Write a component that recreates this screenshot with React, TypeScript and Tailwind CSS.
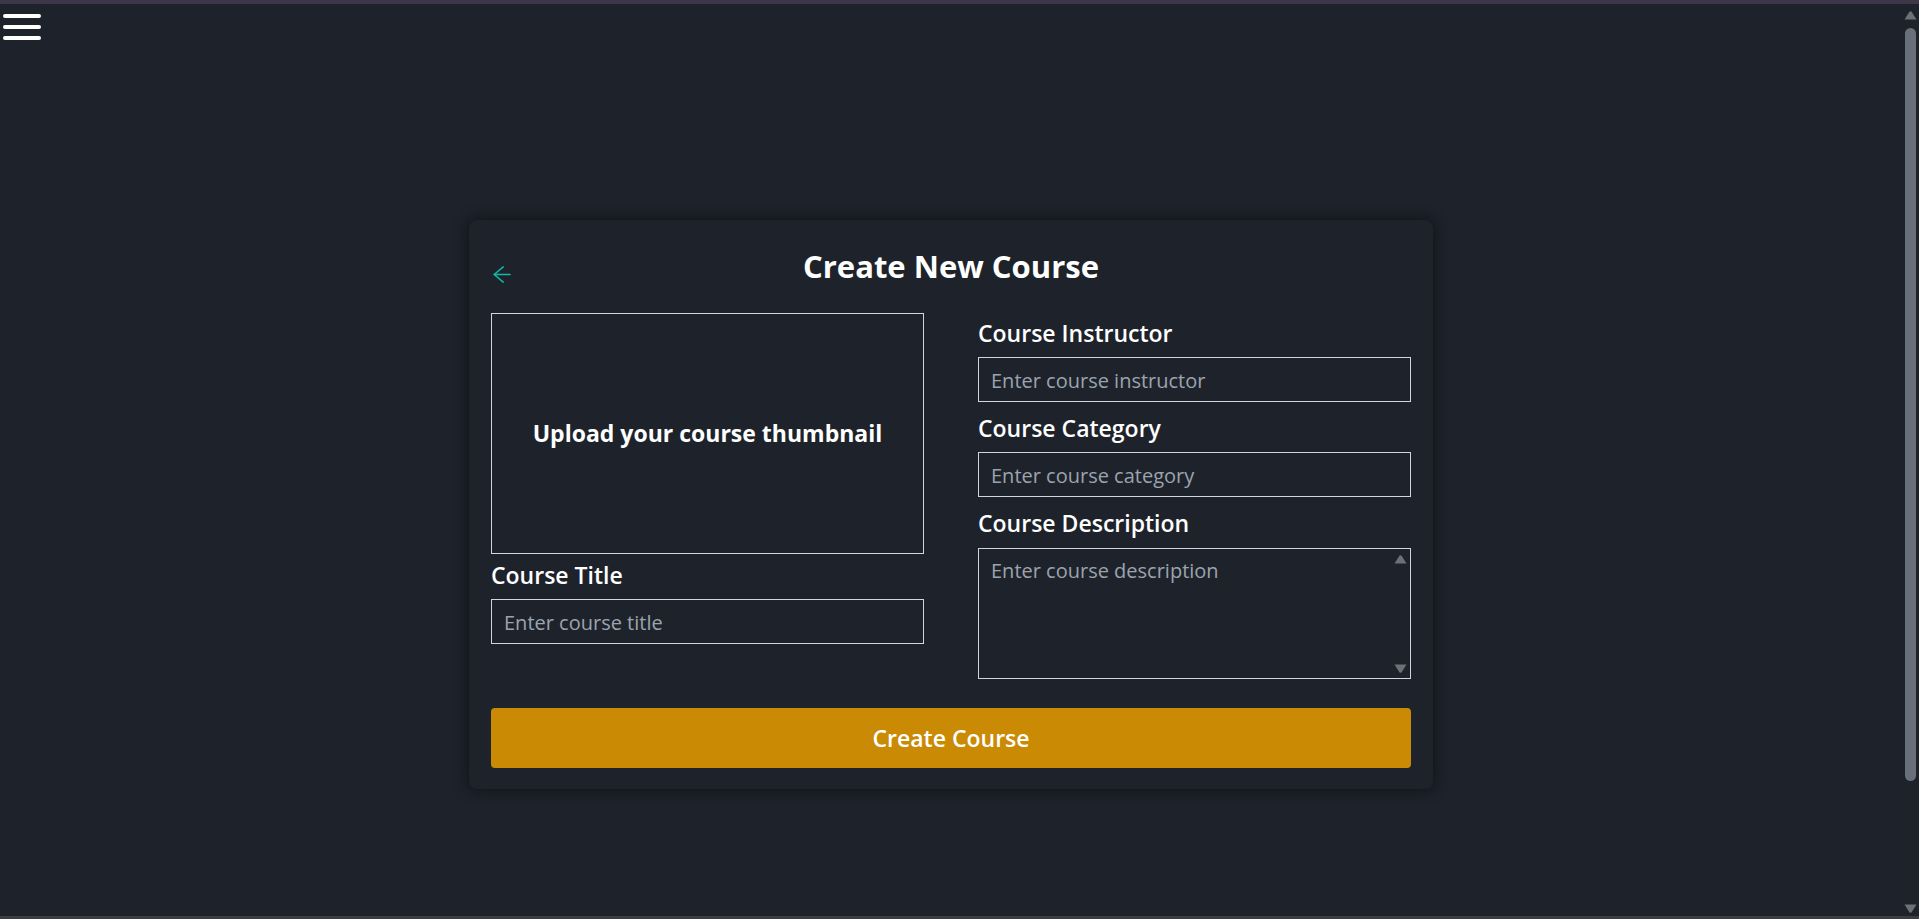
import { useState } from "react";

function Hamburger() {
  return (
    <button className="flex flex-col gap-[7px] pl-[3px] pt-[10px]">
      <span className="block h-1 w-[38px] rounded-full bg-white" />
      <span className="block h-1 w-[38px] rounded-full bg-white" />
      <span className="block h-1 w-[38px] rounded-full bg-white" />
    </button>
  );
}

function Triangle({ down = false, className = "" }: { down?: boolean; className?: string }) {
  return (
    <svg width="13" height="9" viewBox="0 0 13 9" className={className}>
      <path
        d={down ? "M0.5 0.5h12L7.6 8.2a1.3 1.3 0 0 1-2.2 0z" : "M0.5 8.5h12L7.6 0.8a1.3 1.3 0 0 0-2.2 0z"}
        fill="#6c7077"
      />
    </svg>
  );
}

function PageScrollbar() {
  return (
    <div className="flex w-[17px] shrink-0 flex-col items-center pt-[7px] pb-[3px]">
      <Triangle />
      <div className="mt-[8px] h-[753px] w-[11px] rounded-full bg-[#6a7079]" />
      <div className="flex-1" />
      <Triangle down />
    </div>
  );
}

function Field({
  label,
  placeholder,
  className = "",
}: {
  label: string;
  placeholder: string;
  className?: string;
}) {
  const [value, setValue] = useState("");
  return (
    <div className={className}>
      <label className="block text-[23px] font-semibold leading-8 text-white">{label}</label>
      <input
        value={value}
        onChange={(e) => setValue(e.target.value)}
        placeholder={placeholder}
        className="mt-2 block h-[45px] w-full border border-gray-300 bg-transparent px-3 pt-px text-[20px] text-white outline-none placeholder:text-[#9ca3af]"
      />
    </div>
  );
}

export default function App() {
  return (
    <div className="flex h-screen flex-col overflow-hidden bg-[#1d222b] font-['Open_Sans',sans-serif] text-white">
      <div className="h-1 shrink-0 bg-[#3d3749]" />
      <div className="flex min-h-0 flex-1">
        <div className="min-w-0 flex-1">
          <header className="h-[41px]">
            <Hamburger />
          </header>

          <main className="flex h-[919px] items-center justify-center">
            <div className="w-[964px] rounded-lg bg-[#1e232b] px-[22px] pt-[28px] pb-[21px] shadow-[0_0_14px_rgba(0,0,0,0.55)]">
              <div className="mb-[29px] grid grid-cols-[1fr_auto_1fr] items-center">
                <button className="mt-[18px] justify-self-start pl-[2px]">
                  <svg width="18" height="18" viewBox="0 0 18 18" fill="none" stroke="#14b8a6" strokeWidth="1.5" strokeLinecap="round" strokeLinejoin="round">
                    <path d="M17 8.5H1.2" />
                    <path d="M10.2 0.9 1.2 8.5l9 7.6" />
                  </svg>
                </button>
                <h1 className="text-[31px] font-bold leading-9">Create New Course</h1>
                <div />
              </div>

              <div className="grid grid-cols-2 gap-x-[54px]">
                <div>
                  <div className="flex h-[241px] items-center justify-center border border-gray-300">
                    <p className="text-[23px] font-bold">Upload your course thumbnail</p>
                  </div>
                  <Field label="Course Title" placeholder="Enter course title" className="mt-[5px]" />
                </div>

                <div className="pt-[4px]">
                  <Field label="Course Instructor" placeholder="Enter course instructor" />
                  <Field label="Course Category" placeholder="Enter course category" className="mt-[10px]" />
                  <div className="mt-[10px]">
                    <label className="block text-[23px] font-semibold leading-8">Course Description</label>
                    <div className="relative mt-[9px]">
                      <textarea
                        placeholder="Enter course description"
                        className="block h-[131px] w-full resize-none border border-gray-300 bg-transparent px-3 py-2 text-[20px] leading-7 text-white outline-none placeholder:text-[#9ca3af]"
                      />
                      <Triangle className="pointer-events-none absolute top-[7px] right-[4px]" />
                      <Triangle down className="pointer-events-none absolute bottom-[6px] right-[4px]" />
                    </div>
                  </div>
                </div>
              </div>

              <button className="mt-[29px] flex h-[60px] w-full items-center justify-center rounded bg-[#ca8a04] pt-px text-[23px] font-semibold text-white">
                Create Course
              </button>
            </div>
          </main>
        </div>
        <PageScrollbar />
      </div>
      <div className="h-[3px] shrink-0 bg-[#3a3d44]" />
    </div>
  );
}
